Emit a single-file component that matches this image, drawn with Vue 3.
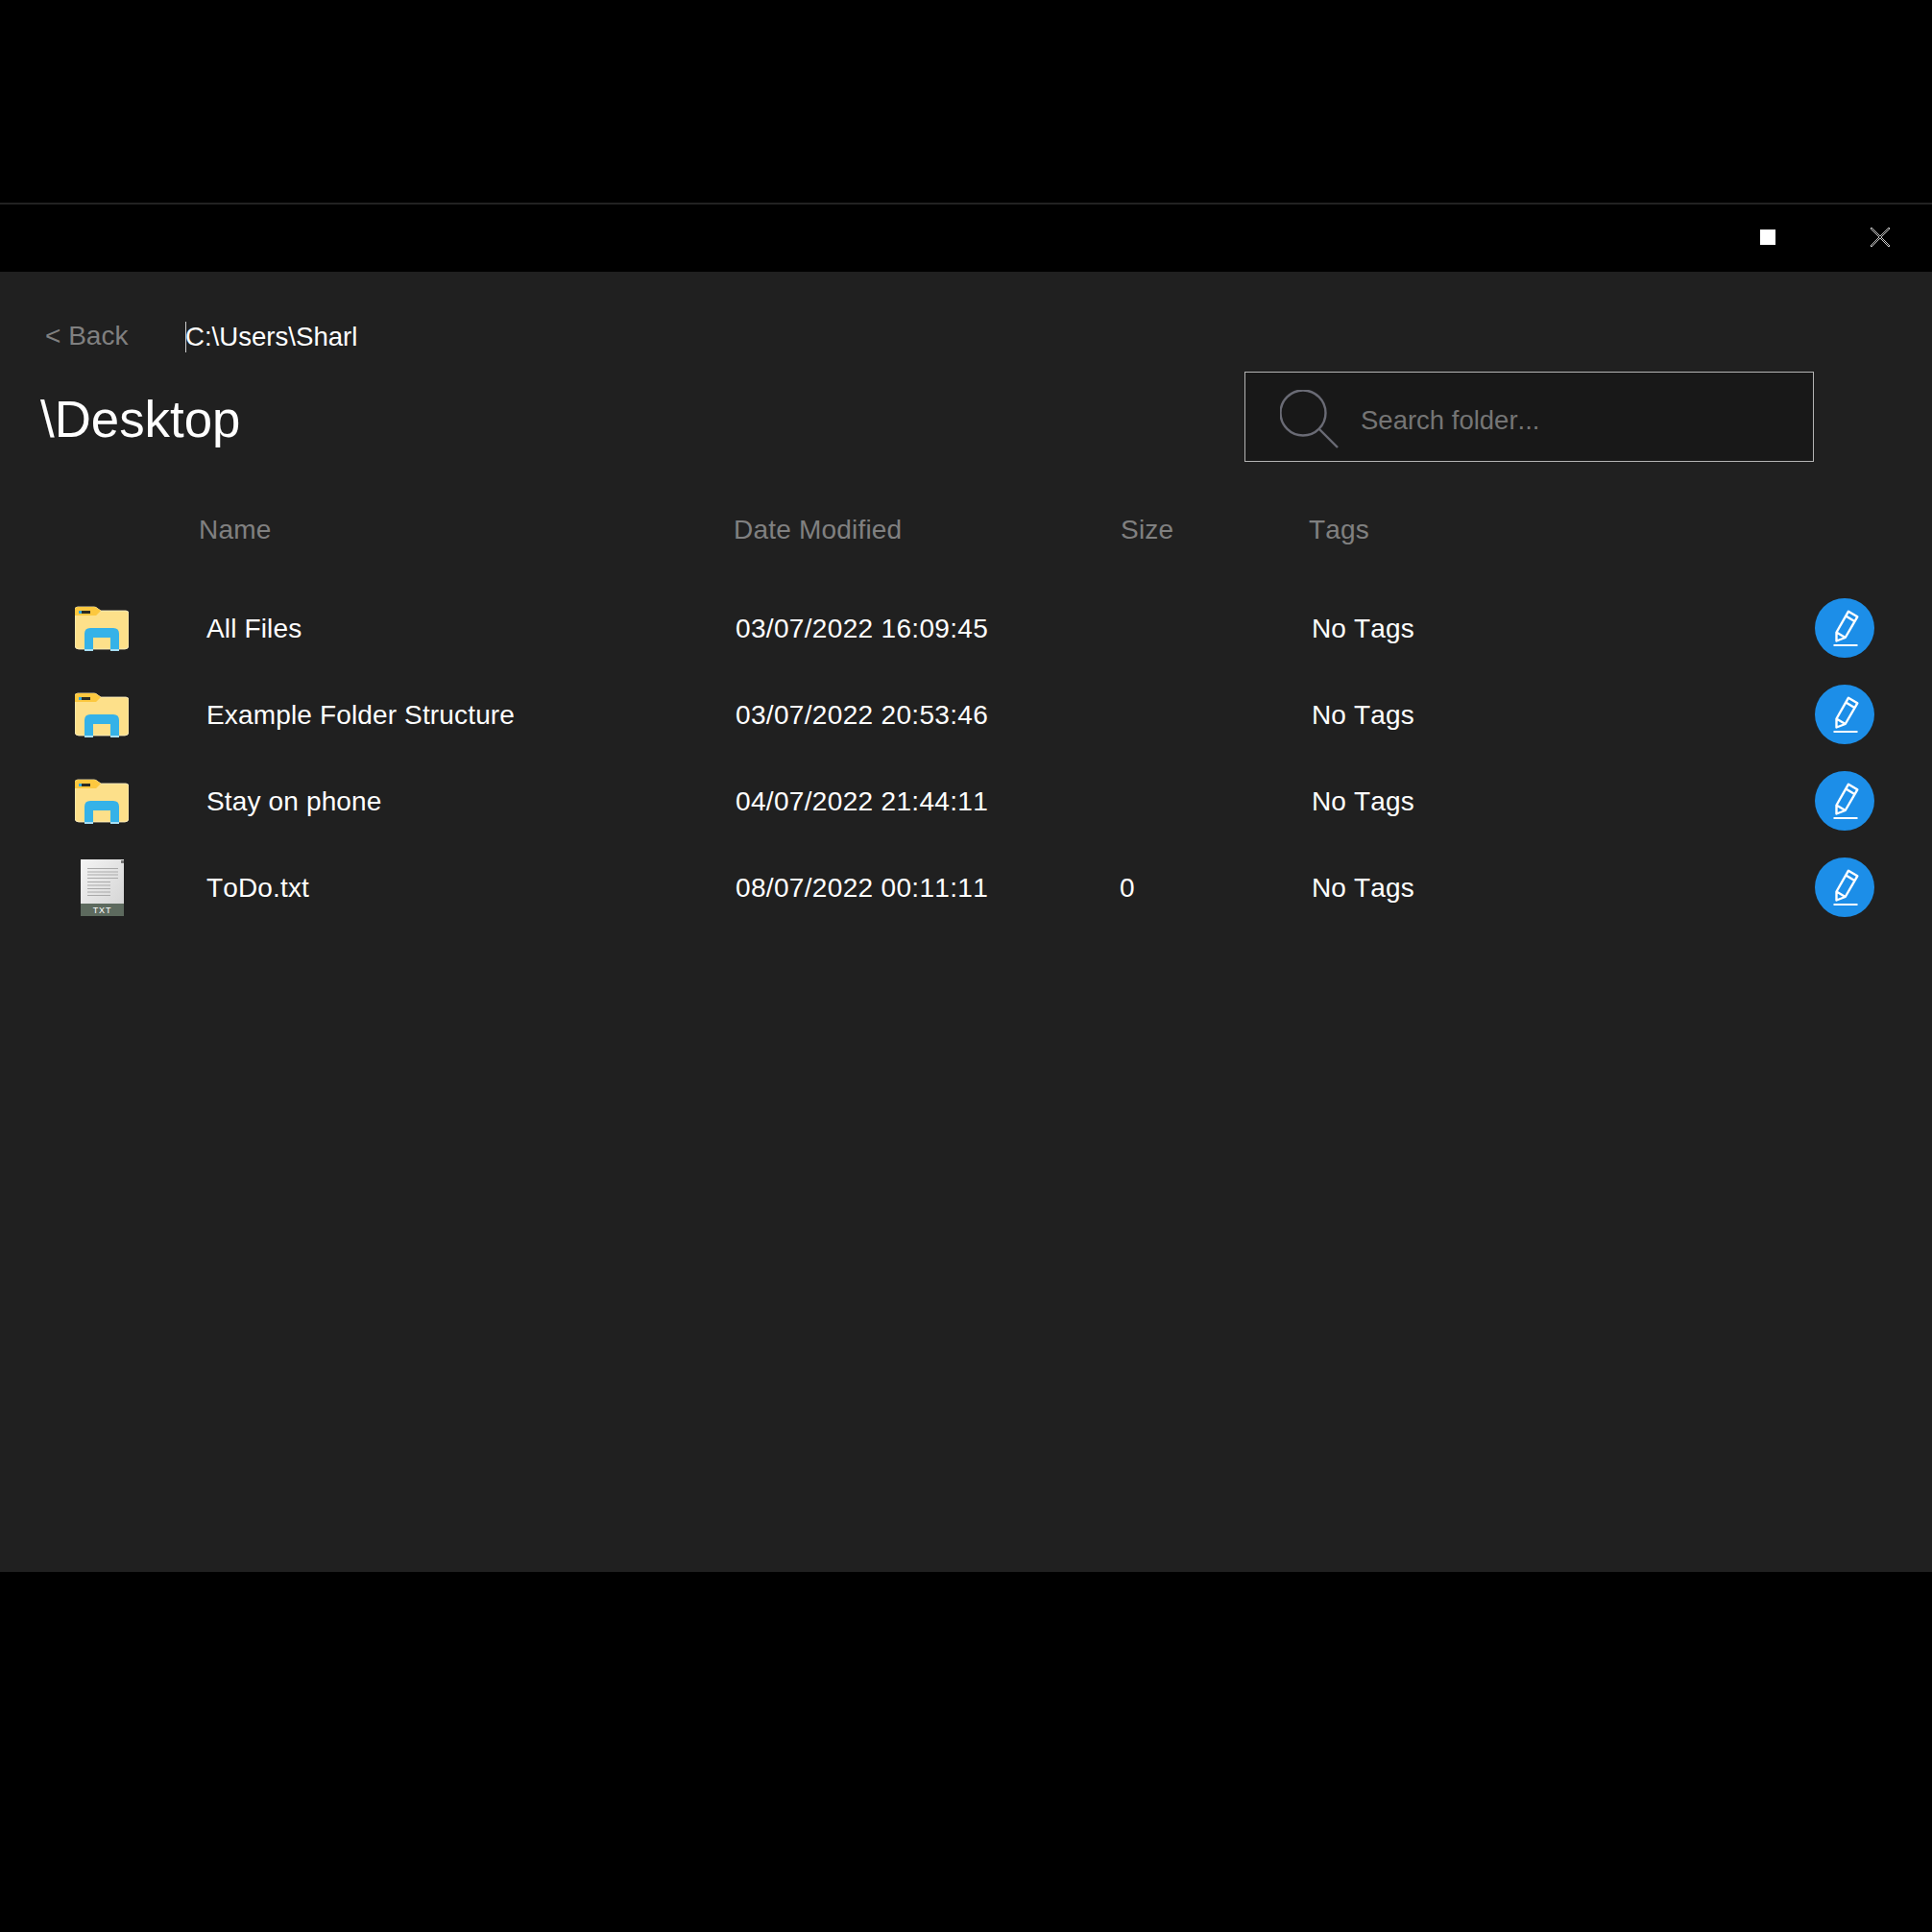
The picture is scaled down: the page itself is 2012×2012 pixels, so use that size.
<template>
  <div class="window">
    <div class="top-gap"></div>
    <div class="titlebar">
      <div class="win-btn">
        <span class="square"></span>
      </div>
      <div class="win-btn close-btn">
        <svg width="20" height="20" viewBox="0 0 20 20" shape-rendering="crispEdges">
          <path d="M1 0 L10 9 L19 0 L20 1 L11 10 L20 19 L19 20 L10 11 L1 20 L0 19 L9 10 L0 1 Z" fill="none" stroke="#c4c4c4" stroke-width="1" />
        </svg>
      </div>
    </div>

    <main class="main">
      <div class="path-row">
        <span class="back">&lt; Back</span>
        <span class="path">C:\Users\Sharl</span>
      </div>

      <div class="title-row">
        <h1 class="title">\Desktop</h1>
        <div class="search">
          <svg class="search-icon" width="62" height="62" viewBox="0 0 62 62">
            <circle cx="24" cy="24" r="23.500" fill="none" stroke="#6a6b75" stroke-width="2.400" />
            <line x1="41" y1="41" x2="60" y2="60" stroke="#6a6b75" stroke-width="2.400" />
          </svg>
          <span class="placeholder">Search folder...</span>
        </div>
      </div>

      <div class="head">
        <span>Name</span>
        <span>Date Modified</span>
        <span>Size</span>
        <span>Tags</span>
      </div>

      <div v-for="row in rows" :key="row.name" class="row">
        <div class="icon-cell">
          <svg v-if="row.type === 'folder'" width="56" height="47" viewBox="0 0 56 47">
            <path d="M0 4 Q0 1 3 1 H20 Q22 1 24 3 L27 5 H53 Q56 5 56 8 V41 Q56 45 52 45 H4 Q0 45 0 41 Z" fill="#fde08a" stroke="#fff3c8" stroke-width=".8" />
            <path d="M0 10 V4 Q0 1 3 1 H20 Q22 1 24 3 L27 5 L22 10 Z" fill="#fcc83f" />
            <rect x="4" y="5" width="3" height="3" fill="#35a7dc" />
            <rect x="7" y="5" width="9" height="3" fill="#2b2b22" />
            <path d="M10 46 V29 Q10 23 16 23 H40 Q46 23 46 29 V46 H37 V33 H19 V46 Z" fill="#35b2e8" />
            <path d="M10 45 H19 V47 H10 Z M37 45 H46 V47 H37 Z" fill="#a8dff5" />
          </svg>
          <svg v-else width="45" height="59" viewBox="0 0 45 59">
            <defs>
              <linearGradient id="paper" x1="0" y1="0" x2="1" y2="1">
                <stop offset="0" stop-color="#f4f4f4" />
                <stop offset="1" stop-color="#d2d2d2" />
              </linearGradient>
            </defs>
            <rect width="45" height="59" fill="url(#paper)" />
            <rect x="42" y="1" width="3" height="3" fill="#777" />
            <g fill="#a9a9a9">
              <rect x="7" y="9" width="32" height="1" />
              <rect x="7" y="12.500" width="32" height="1" />
              <rect x="7" y="15.500" width="32" height="1" />
              <rect x="7" y="19" width="32" height="1" />
              <rect x="7" y="23" width="24" height="1" />
              <rect x="7" y="26.500" width="24" height="1" />
              <rect x="7" y="30" width="24" height="1" />
              <rect x="7" y="33.500" width="24" height="1" />
              <rect x="7" y="37" width="24" height="1" />
            </g>
            <rect y="46" width="45" height="13" fill="#5d6a5e" />
            <text x="22.500" y="56" text-anchor="middle" class="txt-label">TXT</text>
          </svg>
        </div>
        <span class="name">{{ row.name }}</span>
        <span class="date">{{ row.date }}</span>
        <span class="date">{{ row.size }}</span>
        <span class="name">No Tags</span>
        <div class="edit">
          <svg width="62" height="62" viewBox="10 8 62 62">
            <path d="M32.500 52.500 L32.500 43.500 L45 21.700 L54.300 27.300 L41.700 49 Z M42.700 26.700 L51.700 32.300 M32.500 43.500 L41.700 49" fill="none" stroke="#fff" stroke-width="2.400" stroke-linejoin="round" />
            <path d="M29.500 57 H54.500" stroke="#fff" stroke-width="2" />
          </svg>
        </div>
      </div>
    </main>
  </div>
</template>

<script setup>
const rows = [
  { name: "All Files", date: "03/07/2022 16:09:45", size: "", type: "folder" },
  { name: "Example Folder Structure", date: "03/07/2022 20:53:46", size: "", type: "folder" },
  { name: "Stay on phone", date: "04/07/2022 21:44:11", size: "", type: "folder" },
  { name: "ToDo.txt", date: "08/07/2022 00:11:11", size: "0", type: "file" },
];
</script>

<style>
html,
body {
  background: #000;
}
</style>

<style scoped>
.window {
  width: 2012px;
  height: 2012px;
  background: #000;
  font-family: "Liberation Sans", Arial, sans-serif;
  font-kerning: none;
  color: #fff;
}

.top-gap {
  height: 211px;
  border-bottom: 2px solid #222;
}

.titlebar {
  height: 70px;
  box-sizing: border-box;
  display: flex;
  justify-content: flex-end;
  align-items: center;
  padding: 0 44px 2px 0;
  gap: 99px;
}

.win-btn {
  display: flex;
}

.square {
  width: 16px;
  height: 16px;
  background: #fff;
}

.main {
  height: 1354px;
  background: #202020;
  display: flex;
  flex-direction: column;
}

.path-row {
  height: 85px;
  padding: 48px 0 0 47px;
  display: flex;
  box-sizing: border-box;
  font-size: 28px;
}

.back {
  width: 146px;
  color: #808080;
  line-height: 38px;
}

.path {
  height: 32px;
  line-height: 32px;
  margin-top: 4px;
  font-size: 27.600px;
  border-left: 1px solid #ccc;
  text-indent: -1px;
}

.title-row {
  height: 113px;
  display: flex;
  justify-content: space-between;
  padding: 19px 123px 0 42px;
  box-sizing: border-box;
}

.title {
  margin: 19px 0 0;
  font-size: 52.800px;
  font-weight: 400;
  line-height: 62px;
}

.search {
  width: 593px;
  height: 94px;
  box-sizing: border-box;
  border: 1px solid #b4b4b4;
  background: #181818;
  display: flex;
  align-items: center;
  padding-left: 36px;
  gap: 22px;
  font-size: 27.500px;
}

.search-icon {
  margin-top: 5px;
}

.placeholder {
  color: #757575;
  margin-top: 7px;
}

.head {
  height: 128px;
  display: grid;
  grid-template-columns: 207px 557px 403px 196px 1fr;
  align-items: center;
  color: #808080;
  font-size: 28px;
  letter-spacing: .2px;
  box-sizing: border-box;
  padding-top: 13px;
}

.head span:first-child {
  grid-column: 1 / 3;
  padding-left: 207px;
}

.head span:nth-child(2) {
  grid-column: 3;
}

.row {
  height: 90px;
  display: grid;
  grid-template-columns: 215px 551px 400px 200px 1fr 62px;
  align-items: center;
  padding-right: 60px;
  font-size: 28px;
}

.name {
  letter-spacing: .15px;
  padding-top: 1px;
}

.date {
  letter-spacing: .33px;
  padding-top: 1px;
}

.icon-cell {
  display: flex;
  justify-content: center;
  width: 212px;
}

.edit {
  width: 62px;
  height: 62px;
  border-radius: 50%;
  background: #1c8ee8;
  display: flex;
}

.txt-label {
  font-family: "Liberation Sans", Arial, sans-serif;
  font-size: 9px;
  letter-spacing: .8px;
  fill: #fff;
}
</style>
